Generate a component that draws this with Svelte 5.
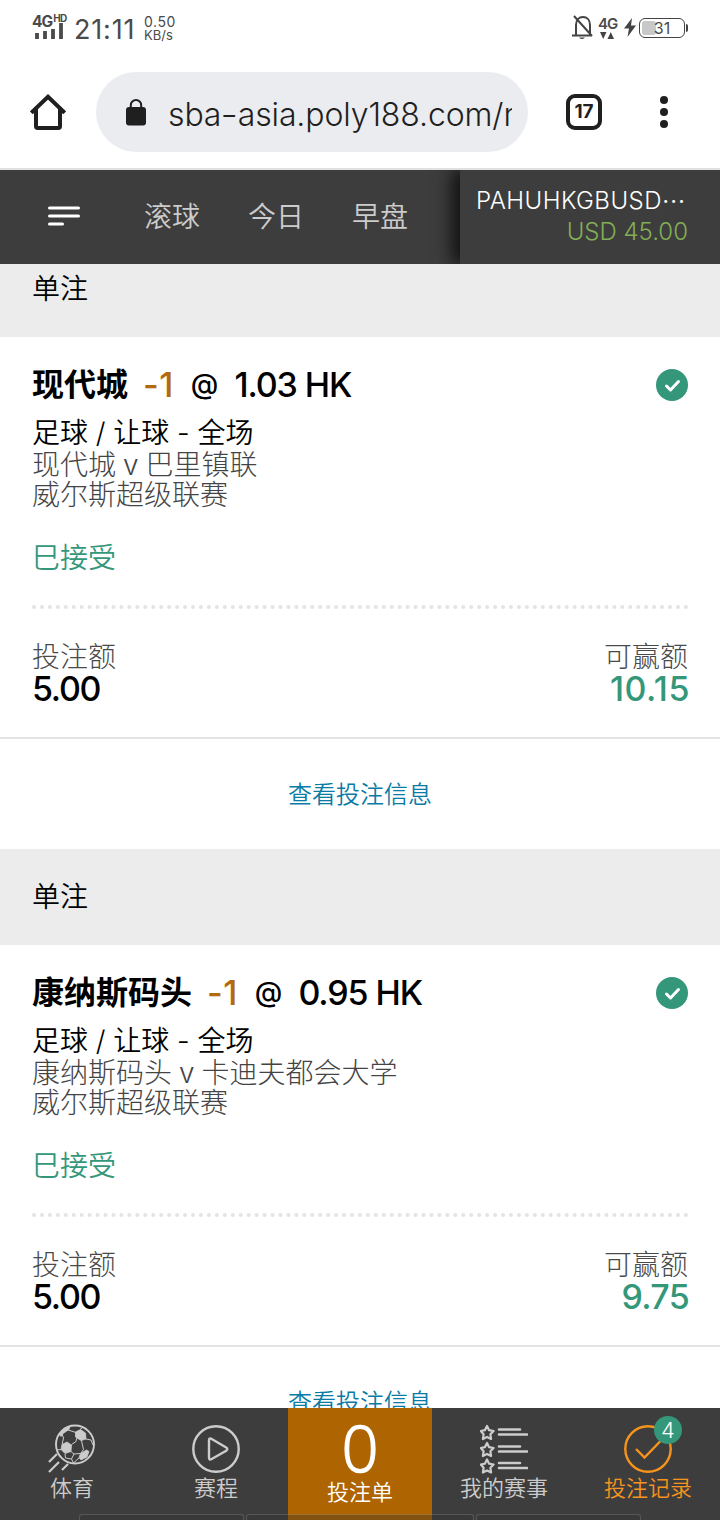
<script lang="ts">
	type Bet = {
		team: string;
		line: string;
		odds: string;
		market: string;
		match: string;
		league: string;
		status: string;
		stake: string;
		win: string;
	};

	const tabs = ['滚球', '今日', '早盘'];

	const bets: Bet[] = [
		{
			team: '现代城',
			line: '-1',
			odds: '1.03 HK',
			market: '足球 / 让球 - 全场',
			match: '现代城 v 巴里镇联',
			league: '威尔斯超级联赛',
			status: '巳接受',
			stake: '5.00',
			win: '10.15'
		},
		{
			team: '康纳斯码头',
			line: '-1',
			odds: '0.95 HK',
			market: '足球 / 让球 - 全场',
			match: '康纳斯码头 v 卡迪夫都会大学',
			league: '威尔斯超级联赛',
			status: '巳接受',
			stake: '5.00',
			win: '9.75'
		}
	];

	const stars = [0, 17, 33.5];
	const slip = 0;
	const records = 4;
</script>

<div class="screen">
	<div class="status">
		<div class="signal">
			<div class="net">4G<sup>HD</sup></div>
			<svg width="30" height="16" viewBox="0 0 30 16">
				<path d="M3 10v6M11 8v8M19 6v10M27 0v16" stroke="#4a4a4a" stroke-width="3.8" />
			</svg>
		</div>
		<div class="clock">21:11</div>
		<div class="speed"><span>0.50</span><span>KB/s</span></div>
		<div class="grow"></div>
		<svg class="bell" width="22" height="26" viewBox="0 0 22 26" fill="none" stroke="#444" stroke-width="2">
			<path d="M4 20V10C4 5 7 2 11 2s7 3 7 8v10M0 20.5h20M2 1l18 20" />
			<path d="M7 22.5h6q-3 3-6 0z" fill="#444" stroke="none" />
		</svg>
		<div class="data">
			<span>4G</span>
			<svg width="14" height="7" viewBox="0 0 14 7"><path d="M0 0h6.500L3.200 7zM7.500 7h6.500L10.800 0z" fill="#444" /></svg>
		</div>
		<svg class="bolt" width="12" height="19" viewBox="0 0 12 19"><path d="M8 0L0 10.500h5L3.500 19 12 7.500H7z" fill="#444" /></svg>
		<div class="battery"><i></i><b>31</b></div>
		<div class="tip"></div>
	</div>

	<div class="browser">
		<svg width="36" height="36" viewBox="0 0 36 36" fill="none" stroke="#1f1f1f" stroke-width="4">
			<path d="M1.300 18.800L18 2.800l16.700 16M6 15.500V32.200q0 1.800 1.800 1.800H28.200q1.800 0 1.800-1.800V15.500" />
		</svg>
		<div class="address">
			<svg width="20" height="27" viewBox="0 0 20 27">
				<path d="M4.800 10V6.200a5.200 5.200 0 0 1 10.400 0V10" fill="none" stroke="#1f1f1f" stroke-width="2" />
				<rect y="8" width="20" height="18.500" rx="3" fill="#1f1f1f" />
			</svg>
			<span>sba<em>-</em>asia.poly188.com/m</span>
		</div>
		<div class="count">17</div>
		<svg class="dots" width="8" height="32" viewBox="0 0 8 32" fill="#1f1f1f">
			<circle cx="4" cy="4" r="4" />
			<circle cx="4" cy="16" r="4" />
			<circle cx="4" cy="28" r="4" />
		</svg>
	</div>

	<header>
		<div class="tabs">
			<svg width="32" height="20" viewBox="0 0 32 20" stroke="#fff" stroke-width="3" stroke-linecap="round">
				<path d="M1.500 2h29M1.500 10h29M1.500 18h13" />
			</svg>
			{#each tabs as tab}
				<span>{tab}</span>
			{/each}
		</div>
		<div class="account">
			<div class="user">PAHUHKGBUSD<em>…</em></div>
			<div class="money">USD 45.00</div>
		</div>
	</header>

	<main>
		<div class="list">
			{#each bets as bet}
				<div class="kind">单注</div>
				<section>
					<div class="title">
						<span class="team">{bet.team}</span>
						<span class="line">{bet.line}</span>
						<span class="at">@</span>
						<span class="odds">{bet.odds}</span>
						<svg width="32" height="32" viewBox="0 0 32 32" fill="none">
							<circle cx="16" cy="16" r="16" fill="#35977a" />
							<path d="M10.500 17l4 4 8-8.500" stroke="#fff" stroke-width="3" stroke-linecap="round" stroke-linejoin="round" />
						</svg>
					</div>
					<div class="market">{bet.market}</div>
					<div class="match">{bet.match}</div>
					<div class="match league">{bet.league}</div>
					<div class="accepted">{bet.status}</div>
					<svg class="rule" width="656" height="4" viewBox="0 0 656 4">
						<path d="M2 2H655" stroke="#e4e4e4" stroke-width="4" stroke-linecap="round" stroke-dasharray="0 7.950" />
					</svg>
					<div class="sums">
						<div><label>投注额</label><strong>{bet.stake}</strong></div>
						<div class="win"><label>可赢额</label><strong class:wide={bet.win.length > 4}>{bet.win}</strong></div>
					</div>
				</section>
				<div class="more">查看投注信息</div>
			{/each}
		</div>
	</main>

	<nav>
		<div class="item">
			<svg width="48" height="50" viewBox="0 0 48 50" fill="none" stroke="#ccc">
				<circle cx="27" cy="20.500" r="19" stroke-width="1.900" />
				<path d="M27.500 8l5-2.500 5 3.500.500 6-5 1.500-5.500-3.500zM14 20.500l5-2.500 4.500 3-.500 6.500-6 2-4-4zM32.500 29.500l6-3.500 2.500 1.500-2 5.500-6 3-2-2.500zM11 10.500q4-7 11-8l-1 3-6 4-2 3z" fill="#ccc" stroke="#ccc" stroke-width=".8" />
				<path d="M20 6l8 2.500M14 10l1.500 4-1.500 6.500M23.500 20.500l4.500-3 1-4M34 19l-.5-3M34 19l1.500 6.500-3 4M38 15l5 1 2 5M32 5.500l3-2.500M23 27.500l3 2.500 6-.5M26 30l-2.500 5 2 4M17 30l.500 4 6 1M9 26l4-.5M31 34l-5.500 5" stroke-width="1" />
				<path d="M1 38l8-8M1 48l10-10M14 46l6-6" stroke-width="2.200" />
			</svg>
			<span>体育</span>
		</div>
		<div class="item">
			<svg width="48" height="50" viewBox="0 0 48 50" fill="none" stroke="#ccc" stroke-width="2.400">
				<circle cx="24" cy="25" r="22.700" />
				<path d="M17 16.500v17q0 3 2.700 1.500l14.500-8.300q2.200-1.700 0-3.200L19.700 15q-2.700-1.500-2.700 1.500z" />
			</svg>
			<span>赛程</span>
		</div>
		<div class="item slip">
			<b>{slip}</b>
			<span>投注单</span>
		</div>
		<div class="item">
			<svg width="48" height="50" viewBox="0 0 48 50" fill="none" stroke="#ccc" stroke-width="2.200" stroke-linejoin="round">
				{#each stars as y}
					<g transform="translate(0 {y})">
						<path d="M7 2l2.100 4.200 4.500.800-3.200 3.300.700 4.700L7 12.900 2.900 15l.700-4.700L.800 7l4.100-.800z" />
						<path d="M19 5.500h21M19 10.500h28" stroke-width="2.600" stroke-linecap="round" />
					</g>
				{/each}
			</svg>
			<span>我的赛事</span>
		</div>
		<div class="item active">
			<svg width="48" height="50" viewBox="0 0 48 50" fill="none" stroke="#f7941d" stroke-width="2.400">
				<circle cx="24" cy="25" r="22.700" />
				<path d="M12 25l8.500 8.500L37 16.500" />
			</svg>
			<i class="badge">{records}</i>
			<span>投注记录</span>
		</div>
		<div class="edge"><i></i><i></i><i></i></div>
	</nav>
</div>

<style>
	:global(body) {
		background: #fff;
	}

	.screen {
		display: flex;
		flex-direction: column;
		width: 720px;
		height: 1520px;
		overflow: hidden;
		background: #fff;
		color: #000;
		font-family: Inter, 'Noto Sans CJK SC', sans-serif;
		font-weight: 350;
		white-space: nowrap;
	}

	svg {
		display: block;
		flex: none;
	}

	em {
		font-style: normal;
	}

	.status {
		display: flex;
		align-items: flex-start;
		height: 56px;
		color: #4a4a4a;
	}

	.signal {
		width: 36px;
		margin-left: 32px;
		padding-top: 13px;

		svg {
			margin: -5px 0 0 2px;
		}
	}

	.net {
		display: flex;
		height: 15px;
		font: 700 15.500px/17px Inter, sans-serif;
		letter-spacing: -0.9px;

		sup {
			margin-left: 1px;
			font-size: 10px;
			line-height: 11px;
			letter-spacing: -0.7px;
		}
	}

	.clock {
		width: 69px;
		margin-left: 6px;
		font-size: 27px;
		font-weight: 400;
		line-height: 60px;
		letter-spacing: 0.800px;
	}

	.speed {
		display: flex;
		flex-direction: column;
		margin-left: 1px;
		padding-top: 16px;
		font-size: 13px;
		font-weight: 400;
		line-height: 12.500px;

		span:first-child {
			font-size: 14px;
			letter-spacing: 0.6px;
		}
	}

	.grow {
		flex: 1;
	}

	.bell {
		margin: 15px 4px 0 0;
	}

	.data {
		width: 20px;
		padding-top: 15px;

		span {
			display: block;
			font-size: 15px;
			font-weight: 600;
			line-height: 17px;
			letter-spacing: -1px;
		}

		svg {
			margin-left: 2px;
		}
	}

	.bolt {
		margin: 18px 3px 0 6px;
	}

	.battery {
		position: relative;
		box-sizing: border-box;
		width: 46px;
		height: 20px;
		margin-top: 18px;
		padding: 2px;
		border: 1.500px solid #444;
		border-radius: 6px;
		text-align: center;

		i {
			display: block;
			width: 14px;
			height: 14px;
			border-radius: 3px;
			background: #c8c8c8;
		}

		b {
			position: absolute;
			inset: 0;
			font-size: 16px;
			font-weight: 400;
			line-height: 18px;
		}
	}

	.tip {
		width: 2px;
		height: 8px;
		margin: 24px 32px 0 1px;
		border-radius: 0 2px 2px 0;
		background: #444;
	}

	.browser {
		display: flex;
		align-items: center;
		height: 112px;
		padding-left: 30px;
		border-bottom: 2px solid #e0e0e0;
	}

	.address {
		display: flex;
		align-items: center;
		box-sizing: border-box;
		width: 432px;
		height: 80px;
		margin: 0 38px 0 30px;
		padding: 0 16px 0 30px;
		border-radius: 40px;
		background: #ebecf0;

		span {
			flex: 1;
			overflow: hidden;
			margin-left: 22px;
			padding-top: 5px;
			color: #1f1f1f;
			font-size: 32px;
			line-height: 48px;
			letter-spacing: -0.120px;
		}

		em {
			display: inline-block;
			margin: 0 1px;
			transform: scaleX(1.200);
		}
	}

	.count {
		box-sizing: border-box;
		width: 36px;
		height: 36px;
		border: 4px solid #1f1f1f;
		border-radius: 9px;
		color: #1f1f1f;
		font-size: 19px;
		font-weight: 650;
		line-height: 28px;
		text-align: center;
	}

	.dots {
		margin-left: 58px;
	}

	header {
		display: flex;
		height: 94px;
		background: #3d3d3d;
	}

	.tabs {
		display: flex;
		align-items: center;
		width: 460px;

		svg {
			margin: -2px 16px 0 48px;
		}

		span {
			width: 56px;
			margin-left: 48px;
			color: #ccc;
			font-size: 28px;
			line-height: 40px;
		}
	}

	.account {
		box-sizing: border-box;
		width: 260px;
		padding: 15px 32px 0 16px;
		background: #3d3d3d;
		box-shadow: -8px 0 16px #111;
		clip-path: inset(0 0 0 -40px);
		color: #fff;
		font-size: 24px;
		font-weight: 350;
		line-height: 31px;
	}

	.user {
		height: 31px;
		letter-spacing: 0.450px;

		em {
			font-size: 28px;
			line-height: 0;
			vertical-align: 6px;
		}
	}

	.money {
		color: #83ae55;
		text-align: right;
	}

	main {
		height: 1144px;
		overflow: hidden;
	}

	/* list is scrolled a little way under the header */
	.list {
		margin-top: -23px;
	}

	.kind {
		height: 96px;
		padding-left: 32px;
		background: #ececec;
		font-size: 28px;
		line-height: 96px;
	}

	section {
		box-sizing: border-box;
		height: 402px;
		padding: 28px 32px 0;
		border-bottom: 2px solid #e4e4e4;
	}

	.title {
		display: flex;
		align-items: center;
		height: 40px;
		font-size: 32px;
		font-weight: 500;
		line-height: 42px;

		svg {
			margin-left: auto;
		}
	}

	.team {
		font-weight: 700;
	}

	.line {
		margin-left: 15px;
		color: #b46a0c;
		font-size: 34px;
		letter-spacing: 0.500px;
	}

	.at {
		margin: -2px 0 0 17px;
		font-size: 28px;
	}

	.odds {
		margin-left: 16px;
		font-size: 34px;
		letter-spacing: -1.100px;
	}

	.market,
	.match {
		height: 31px;
		font-size: 28px;
		line-height: 31px;
	}

	.market {
		height: 32px;
		margin-top: 13px;
		word-spacing: -0.100px;
	}

	.match {
		color: #444;
		font-weight: 300;
		word-spacing: -0.900px;
	}

	.league {
		height: 30px;
		line-height: 29px;
	}

	.accepted {
		height: 40px;
		margin-top: 27px;
		color: #35977a;
		font-size: 28px;
		line-height: 40px;
	}

	.rule {
		margin-top: 27px;
	}

	.sums {
		display: flex;
		justify-content: space-between;
		margin-top: 32px;

		label,
		strong {
			display: block;
			line-height: 33px;
		}

		label {
			height: 31px;
			color: #4a4a4a;
			font-size: 28px;
			font-weight: 300;
			line-height: 33px;
		}

		strong {
			font-size: 34px;
			font-weight: 500;
			letter-spacing: -1.300px;
		}
	}

	.win {
		text-align: right;

		strong {
			margin-right: -1px;
			color: #35977a;
			letter-spacing: -0.700px;
		}

		.wide {
			margin-right: -2px;
			letter-spacing: 0.500px;
		}
	}

	.more {
		height: 110px;
		color: #0a7ba5;
		font-size: 24px;
		line-height: 111px;
		text-align: center;
	}

	nav {
		position: relative;
		display: flex;
		height: 112px;
		background: #3d3d3d;
	}

	.item {
		position: relative;
		display: flex;
		flex-direction: column;
		align-items: center;
		box-sizing: border-box;
		width: 144px;
		padding-top: 16px;
		color: #ccc;
		font-size: 22px;
		line-height: 28px;
	}

	.slip {
		background: #ae6400;
		color: #fff;

		b {
			height: 54px;
			font-family: 'Open Sans', sans-serif;
			font-size: 65px;
			font-weight: 300;
			line-height: 47px;
			-webkit-text-stroke: 1.500px #fff;
		}
	}

	.active {
		color: #f7941d;
	}

	.badge {
		position: absolute;
		top: 8px;
		left: 78px;
		width: 28px;
		height: 28px;
		border-radius: 50%;
		background: #35977a;
		color: #fff;
		font-size: 22px;
		font-style: normal;
		line-height: 28px;
		text-align: center;
	}

	/* faint outline of the bar peeking in from below */
	.edge {
		position: absolute;
		left: 79px;
		bottom: 0;
		display: grid;
		grid-template-columns: 165px 228px 165px;
		gap: 2px;
		height: 6px;
		opacity: 0.35;

		i {
			border: 1px solid #888;
			border-bottom: 0;
			border-radius: 3px 3px 0 0;
			background: #333;
		}
	}
</style>
